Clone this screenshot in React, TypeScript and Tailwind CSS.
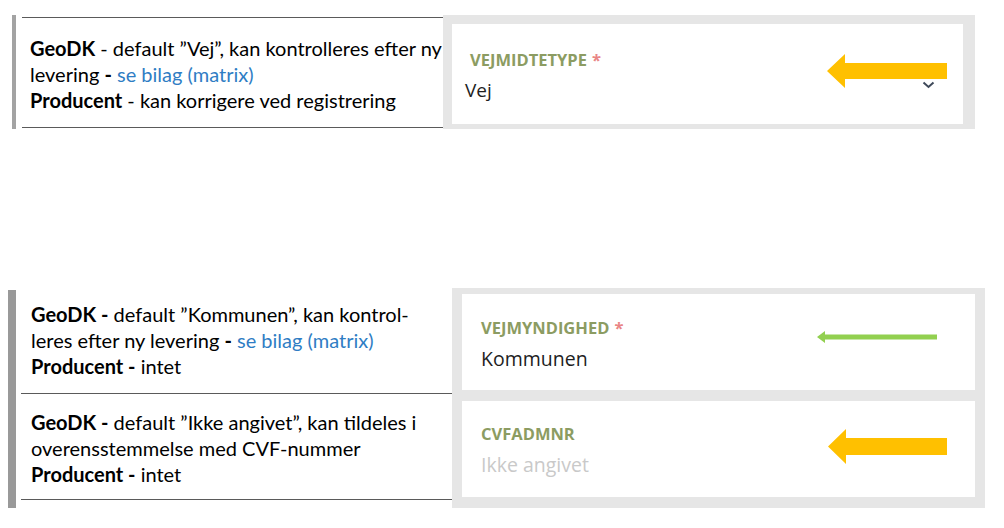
import React from 'react';

const leftFont = { fontFamily: 'Lato, "Liberation Sans", sans-serif' };
const uiFont = { fontFamily: '"Open Sans", "Liberation Sans", sans-serif' };

function Arrow({ className, w, h, shaft, head }: TArrow): React.ReactElement {
  const top = (h - shaft) / 2;
  return (
    <svg
      className={className}
      width={w}
      height={h}
      viewBox={`0 0 ${w} ${h}`}
    >
      <polygon
        points={`0,${h / 2} ${head},0 ${head},${top} ${w},${top} ${w},${top + shaft} ${head},${top + shaft} ${head},${h}`}
        fill="currentColor"
      />
    </svg>
  );
}

type TArrow = { className: string; w: number; h: number; shaft: number; head: number };

function Label({ text, required, className }: { text: string; required?: boolean; className?: string }): React.ReactElement {
  return (
    <div
      className={`h-[20px] text-[16.5px] font-bold leading-[20px] text-[#8c9c62] ${className ?? ''}`}
      style={uiFont}
    >
      {text}
      {required && <span className="ml-[5px] text-[#e98585]">*</span>}
    </div>
  );
}

function Bold({ children }: { children: React.ReactNode }): React.ReactElement {
  return <span className="font-bold">{children}</span>;
}

function Link({ children }: { children: React.ReactNode }): React.ReactElement {
  return <span className="text-[#2f7dc4]">{children}</span>;
}

export default function App(): React.ReactElement {
  return (
    <div className="h-[528px] w-[1004px] overflow-hidden bg-white">
      {/* first field */}
      <div className="mt-[15px] flex h-[114px]">
        <div className="ml-[12px] w-[4px] bg-[#a3a3a3]" />
        <div
          className="ml-[6px] mt-[2px] h-[111px] w-[424px] border-y border-[#5a5a5a] pl-[8px] pt-[17px] text-[20px] leading-[26px] whitespace-nowrap text-black"
          style={leftFont}
        >
          <div>
            <Bold>GeoDK</Bold> - default ”Vej”, kan kontrolleres efter ny
          </div>
          <div>
            levering <Bold>-</Bold> <Link>se bilag (matrix)</Link>
          </div>
          <div>
            <Bold>Producent</Bold> - kan korrigere ved registrering
          </div>
        </div>
        <div className="-ml-[3px] w-[532px] bg-[#e6e6e6] pb-[5px] pl-[9px] pr-[12px] pt-[9px]">
          <div className="relative h-full bg-white pl-[13px] pt-[26px]">
            <Label text="VEJMIDTETYPE" required className="ml-[5px]" />
            <div className="mt-[7px] text-[19px] leading-[26px] text-[#1e1e1e]" style={uiFont}>
              Vej
            </div>
            <svg
              className="absolute left-[470px] top-[57px] text-[#3f4a5a]"
              width="13"
              height="8"
              viewBox="0 0 13 8"
            >
              <polyline
                points="1.5,1.5 6.5,6 11.5,1.5"
                fill="none"
                stroke="currentColor"
                strokeWidth="2"
              />
            </svg>
            <Arrow
              className="absolute left-[375px] top-[30px] text-[#ffc000]"
              w={120}
              h={34}
              shaft={16}
              head={18}
            />
          </div>
        </div>
      </div>

      {/* second and third field */}
      <div className="mt-[159px] flex h-[220px]">
        <div className="ml-[8px] mt-[2px] h-[218px] w-[8px] bg-[#999999]" />
        <div
          className="ml-[5px] w-[433px] text-[20px] leading-[26px] whitespace-nowrap text-black"
          style={leftFont}
        >
          <div className="h-[106px] border-b border-[#5a5a5a] pl-[10px] pt-[13px]">
            <div>
              <Bold>GeoDK -</Bold> default ”Kommunen”, kan kontrol-
            </div>
            <div>
              leres efter ny levering <Bold>-</Bold> <Link>se bilag (matrix)</Link>
            </div>
            <div>
              <Bold>Producent -</Bold> intet
            </div>
          </div>
          <div className="h-[106px] border-b border-[#5a5a5a] pl-[10px] pt-[15px]">
            <div>
              <Bold>GeoDK -</Bold> default ”Ikke angivet”, kan tildeles i
            </div>
            <div>overensstemmelse med CVF-nummer</div>
            <div>
              <Bold>Producent -</Bold> intet
            </div>
          </div>
        </div>
        <div className="-ml-[2px] flex w-[533px] flex-col gap-[11px] bg-[#e6e6e6] px-[10px] pb-[11px] pt-[6px]">
          <div className="relative h-[96px] bg-white pl-[19px] pt-[24px]">
            <Label text="VEJMYNDIGHED" required />
            <div className="mt-[8px] text-[19.5px] leading-[26px] text-[#1e1e1e]" style={uiFont}>
              Kommunen
            </div>
            <Arrow
              className="absolute left-[355px] top-[37px] text-[#92d050]"
              w={120}
              h={12}
              shaft={5}
              head={8}
            />
          </div>
          <div className="relative h-[96px] bg-white pl-[19px] pt-[23px]">
            <Label text="CVFADMNR" />
            <div className="mt-[8px] text-[19.5px] leading-[26px] text-[#c9c9c9]" style={uiFont}>
              Ikke angivet
            </div>
            <Arrow
              className="absolute left-[366px] top-[28px] text-[#ffc000]"
              w={119}
              h={35}
              shaft={17}
              head={18}
            />
          </div>
        </div>
      </div>
    </div>
  );
}
